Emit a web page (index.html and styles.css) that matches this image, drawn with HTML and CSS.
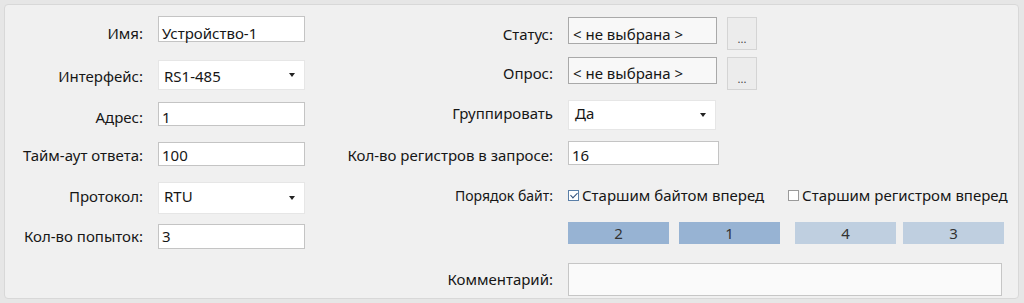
FILE: index.html
```html
<!DOCTYPE html>
<html lang="ru">
<head>
    <meta charset="UTF-8">
    <title>Устройство</title>
    <link rel="stylesheet" href="styles.css">
</head>
<body>
    <div class="panel">
        <!-- левая колонка -->
        <div class="col col-left">
            <div class="row r-name">
                <span class="label">Имя:</span>
                <div class="field edit">Устройство-1</div>
            </div>
            <div class="row r-iface">
                <span class="label">Интерфейс:</span>
                <div class="field combo">RS1-485<span class="arrow"></span></div>
            </div>
            <div class="row r-addr">
                <span class="label">Адрес:</span>
                <div class="field edit">1</div>
            </div>
            <div class="row r-timeout">
                <span class="label">Тайм-аут ответа:</span>
                <div class="field edit">100</div>
            </div>
            <div class="row r-proto">
                <span class="label">Протокол:</span>
                <div class="field combo">RTU<span class="arrow"></span></div>
            </div>
            <div class="row r-tries">
                <span class="label">Кол-во попыток:</span>
                <div class="field edit">3</div>
            </div>
        </div>

        <!-- правая колонка -->
        <div class="col col-right">
            <div class="row r-status">
                <span class="label">Статус:</span>
                <div class="field ro">&lt; не выбрана &gt;</div>
                <div class="btn-dots">...</div>
            </div>
            <div class="row r-poll">
                <span class="label">Опрос:</span>
                <div class="field ro">&lt; не выбрана &gt;</div>
                <div class="btn-dots">...</div>
            </div>
            <div class="row r-group">
                <span class="label">Группировать</span>
                <div class="field combo">Да<span class="arrow"></span></div>
            </div>
            <div class="row r-regs">
                <span class="label">Кол-во регистров в запросе:</span>
                <div class="field edit">16</div>
            </div>
            <div class="row r-order">
                <span class="label small">Порядок байт:</span>
                <label class="check checked"><span class="box"></span>Старшим байтом вперед</label>
                <label class="check"><span class="box"></span>Старшим регистром вперед</label>
            </div>
            <div class="row r-bytes">
                <span class="label"></span>
                <div class="bytes">
                    <div class="byte hi">2</div>
                    <div class="byte hi">1</div>
                    <div class="byte lo">4</div>
                    <div class="byte lo">3</div>
                </div>
            </div>
            <div class="row r-comment">
                <span class="label">Комментарий:</span>
                <div class="field memo">&nbsp;</div>
            </div>
        </div>
    </div>
</body>
</html>
```

FILE: styles.css
```css
* {
    margin: 0;
    padding: 0;
    box-sizing: border-box;
}

html, body {
    width: 100%;
    height: 100%;
    overflow: hidden;
}

body {
    background: #e6e6e6;
    font-family: "Noto Sans", "Open Sans", sans-serif;
    font-size: 15px;
    line-height: 20px;
    color: #161616;
    padding: 4px 5px 4px 4px;
}

.panel {
    height: 295px;
    background: #f0f0f0;
    border: 1px solid #d8d8d8;
    border-radius: 4px;
    display: flex;
}

.col {
    display: flex;
    flex-direction: column;
}

.col-left {
    width: 310px;
    padding-top: 11px;
}

.col-right {
    flex: 1;
    padding-top: 12px;
    padding-left: 5px;
}

.row {
    display: flex;
    align-items: baseline;
}

.col-left .label {
    width: 138px;
}

.col-right .label {
    width: 233px;
}

.label {
    text-align: right;
    margin-right: 15px;
    flex-shrink: 0;
    white-space: nowrap;
}

.field {
    position: relative;
    background: #fff;
    border: 1px solid #c4c4c4;
    padding: 5px 3px 0;
    white-space: nowrap;
}

.col-left .field {
    width: 147px;
}

/* отступы строк слева */
.r-name .field { height: 26px; padding-top: 6px; }
.r-iface { margin-top: 17px; }
.r-iface .field { height: 30px; padding-top: 5px; }
.r-addr { margin-top: 12px; }
.r-addr .field { height: 24px; padding-top: 4px; }
.r-timeout { margin-top: 15px; }
.r-timeout .field { height: 24px; padding-top: 2px; }
.r-proto { margin-top: 16px; }
.r-proto .field { height: 32px; padding-top: 3px; }
.r-tries { margin-top: 10px; }
.r-tries .field { height: 25px; padding-top: 1px; }

.combo {
    border-color: #e6e6e6;
    padding-left: 5px;
}

.arrow {
    position: absolute;
    right: 9px;
    top: 50%;
    margin-top: -2px;
    border-left: 3.5px solid transparent;
    border-right: 3.5px solid transparent;
    border-top: 4px solid #222;
}

.ro {
    width: 149px;
    height: 27px;
    background: #f8f8f8;
    border-color: #a9a9a9;
    padding-left: 4px;
}

.r-status .ro { padding-top: 6px; }
.r-poll .ro { padding-top: 5px; }

.btn-dots {
    width: 30px;
    height: 33px;
    margin-left: 10px;
    align-self: flex-start;
    background: #ececec;
    border: 1px solid #d4d4d4;
    font-size: 11px;
    line-height: 10px;
    color: #444;
    text-align: center;
    padding-top: 16px;
}

/* отступы строк справа */
.r-poll { margin-top: 7px; }
.r-group { margin-top: 10px; }
.r-group .field { width: 148px; height: 30px; padding-top: 2px; padding-left: 6px; }
.r-regs { margin-top: 11px; }
.r-regs .field { width: 151px; height: 24px; padding-top: 3px; }
.r-order { margin-top: 20px; height: 20px; }
.r-bytes { margin-top: 17px; }
.r-comment { margin-top: 19px; }

.label.small {
    font-size: 14px;
}

.check {
    display: flex;
    align-items: center;
    white-space: nowrap;
}

.check + .check {
    margin-left: 24px;
}

.box {
    width: 11px;
    height: 11px;
    border: 1px solid #9a9a9a;
    background: #fff;
    margin-right: 3px;
    position: relative;
}

.check.checked .box {
    border-color: #5a7fa8;
}

.check.checked .box::after {
    content: "";
    position: absolute;
    left: 2.5px;
    top: 0;
    width: 3px;
    height: 6px;
    border-right: 1.5px solid #2f4f7a;
    border-bottom: 1.5px solid #2f4f7a;
    transform: rotate(45deg);
}

.bytes {
    display: flex;
    gap: 10px;
}

.byte {
    width: 101px;
    height: 22px;
    text-align: center;
    line-height: 22px;
    color: #333;
}

.byte:nth-child(3) {
    margin-left: 5px;
}

.byte:nth-child(4) {
    margin-left: -3px;
}

.byte.hi {
    background: #97b3d3;
}

.byte.lo {
    background: #bfcfe0;
}

.memo {
    width: 434px;
    height: 33px;
    background: #fafafa;
    border-color: #c6c6c6;
    padding-top: 5px;
}
```
